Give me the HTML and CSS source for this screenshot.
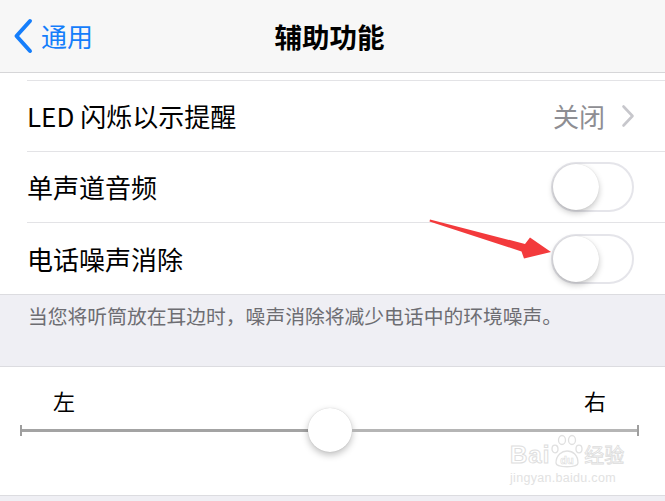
FILE: index.html
```html
<!DOCTYPE html>
<html lang="zh-CN">
<head>
<meta charset="utf-8">
<title>辅助功能</title>
<link rel="stylesheet" href="styles.css">
</head>
<body>
<div class="screen">
  <header class="nav">
    <div class="back">
      <svg class="back-icon" width="22" height="36" viewBox="0 0 22 36"><path d="M18 3 L4.5 18 L18 33" fill="none" stroke="#157efb" stroke-width="4" stroke-linecap="round" stroke-linejoin="round"/></svg>
      <span class="back-text">通用</span>
    </div>
    <div class="title">辅助功能</div>
  </header>

  <section class="group">
    <div class="spacer"></div>
    <div class="row">
      <span class="label">LED 闪烁以示提醒</span>
      <span class="detail">关闭
        <svg class="chev" width="14" height="24" viewBox="0 0 14 24"><path d="M2.5 2.5 L11.5 12 L2.5 21.5" fill="none" stroke="#c7c7cc" stroke-width="2.6" stroke-linecap="round" stroke-linejoin="round"/></svg>
      </span>
    </div>
    <div class="row">
      <span class="label">单声道音频</span>
      <span class="toggle"><span class="knob"></span></span>
    </div>
    <div class="row last">
      <span class="label">电话噪声消除</span>
      <span class="toggle"><span class="knob"></span></span>
    </div>
  </section>

  <div class="footer">当您将听筒放在耳边时，噪声消除将减少电话中的环境噪声。</div>

  <section class="slider-group">
    <div class="lr">
      <span>左</span>
      <span>右</span>
    </div>
    <div class="slider">
      <span class="tick"></span>
      <span class="seg left"></span>
      <span class="thumb"></span>
      <span class="seg right"></span>
      <span class="tick"></span>
    </div>
    <div class="watermark">
      <div class="wm-top">
        <span class="wm-bai">Bai</span>
        <svg class="paw" width="34" height="36" viewBox="0 0 34 36">
          <g fill="#fff" stroke="#e0e0e0" stroke-width="1.3">
            <ellipse cx="12" cy="6" rx="3.5" ry="4.5"/>
            <ellipse cx="22" cy="6" rx="3.5" ry="4.5"/>
            <ellipse cx="5" cy="15" rx="3" ry="3.8"/>
            <ellipse cx="29" cy="15" rx="3" ry="3.8"/>
            <path d="M6 29 C6 21 12 17 17 17 C23 17 28 21 28 29 C28 34 6 34 6 29 Z"/>
          </g>
          <text x="17" y="30" text-anchor="middle" class="wm-du">du</text>
        </svg>
        <span class="wm-jy">经验</span>
      </div>
      <div class="wm-url">jingyan.baidu.com</div>
    </div>
  </section>

  <svg class="arrow" width="665" height="501" viewBox="0 0 665 501">
    <polygon points="430,219.5 525,244 530,237.5 551,252 524,258.5 521.5,251.5 429.5,221.5" fill="#f33a3c"/>
  </svg>
</div>
</body>
</html>
```
FILE: styles.css
```css
html, body {
  margin: 0;
  padding: 0;
}
body {
  width: 665px;
  height: 501px;
  overflow: hidden;
  background: #efeff4;
  font-family: "Noto Sans CJK SC", "Noto Sans", sans-serif;
  color: #000;
}
.screen {
  position: relative;
  width: 665px;
  height: 501px;
  background: #efeff4;
}
.nav {
  position: relative;
  height: 72px;
  background: #f7f7f7;
  border-bottom: 1px solid #d6d6d8;
  display: flex;
  align-items: center;
  justify-content: center;
}
.back {
  position: absolute;
  left: 12px;
  top: 18px;
  display: flex;
  align-items: center;
  gap: 7px;
  color: #157efb;
}
.back-text {
  font-size: 26px;
  line-height: 36px;
}
.title {
  font-size: 27.5px;
  font-weight: 700;
  line-height: 34px;
  margin-left: -6px;
}
.group {
  background: #fff;
  border-bottom: 1px solid #dcdce0;
}
.spacer {
  height: 7px;
}
.row {
  height: 70px;
  margin-left: 27px;
  padding-right: 31px;
  border-top: 1px solid #e3e3e6;
  display: flex;
  align-items: center;
  justify-content: space-between;
}
.row.last {
  height: 71px;
}
.label {
  font-size: 26px;
  line-height: 34px;
}
.detail {
  display: flex;
  align-items: center;
  gap: 16px;
  color: #8e8e93;
  font-size: 26px;
  line-height: 34px;
}
.chev {
  margin-right: -1px;
}
.toggle {
  position: relative;
  width: 83px;
  height: 50px;
  box-sizing: border-box;
  border: 2px solid #e5e5ea;
  border-radius: 25px;
  background: #fff;
}
.knob {
  position: absolute;
  left: 0;
  top: 0;
  width: 46px;
  height: 46px;
  border-radius: 50%;
  background: #fff;
  box-shadow: 0 3px 6px rgba(0,0,0,0.22), 0 0 1px rgba(0,0,0,0.15);
}
.footer {
  height: 71px;
  box-sizing: border-box;
  padding: 10px 0 0 28px;
  font-size: 19.8px;
  line-height: 22px;
  color: #6d6d72;
}
.slider-group {
  position: relative;
  height: 128px;
  background: #fff;
  border-top: 1px solid #dcdce0;
  border-bottom: 1px solid #dcdce0;
  padding: 0 26px 0 20px;
}
.lr {
  display: flex;
  justify-content: space-between;
  padding: 22px 33px 0 33px;
  font-size: 22px;
  line-height: 22px;
}
.slider {
  display: flex;
  align-items: center;
  height: 44px;
  margin-top: -3px;
}
.tick {
  width: 2px;
  height: 11px;
  background: #9e9e9e;
}
.seg {
  flex: 1;
  height: 3px;
}
.seg.left {
  background: #a3a3a3;
}
.seg.right {
  background: #b5b5b5;
}
.thumb {
  width: 44px;
  height: 44px;
  border-radius: 50%;
  background: #fff;
  box-shadow: 0 3px 7px rgba(0,0,0,0.25), 0 0 1px rgba(0,0,0,0.2);
}
.watermark {
  position: absolute;
  left: 510px;
  top: 62px;
  width: 124px;
  font-family: "Liberation Sans", sans-serif;
}
.wm-top {
  display: flex;
  align-items: flex-end;
  height: 38px;
}
.wm-bai {
  font-size: 24px;
  line-height: 24px;
  font-weight: 700;
  color: #fff;
  -webkit-text-stroke: 1px #dedede;
  letter-spacing: 1px;
}
.paw {
  margin: 0 0 -3px 0;
}
.wm-du {
  font-family: "Liberation Sans", sans-serif;
  font-size: 11px;
  font-weight: 700;
  fill: #fff;
  stroke: #dcdcdc;
  stroke-width: 0.6;
}
.wm-jy {
  font-family: "Noto Sans CJK SC", sans-serif;
  font-size: 20px;
  line-height: 24px;
  color: #fff;
  -webkit-text-stroke: 0.8px #dcdcdc;
}
.wm-url {
  font-size: 12.5px;
  line-height: 16px;
  color: #e2e2e2;
  letter-spacing: 0.3px;
  margin-top: 3px;
}
.arrow {
  position: absolute;
  left: 0;
  top: 0;
  pointer-events: none;
}
```
